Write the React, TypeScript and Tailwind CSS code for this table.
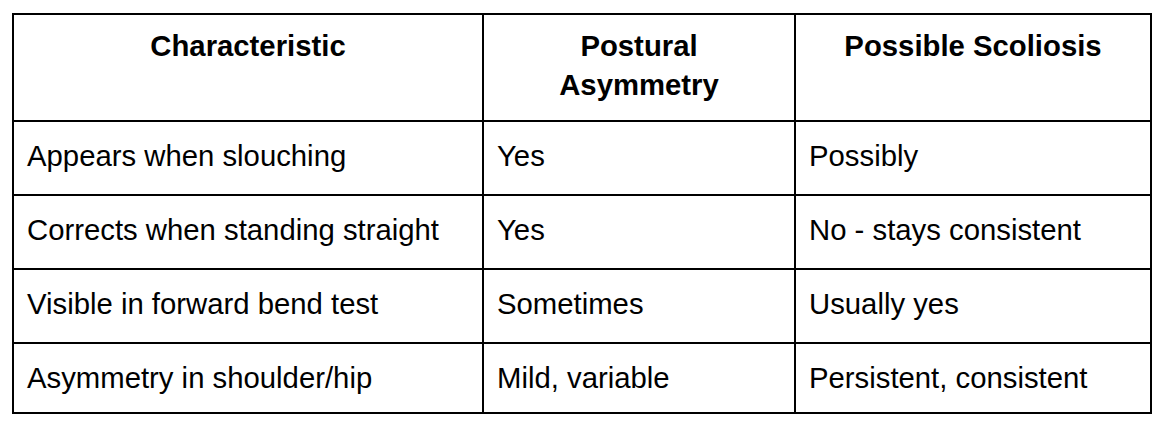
const rows = [
  ["Appears when slouching", "Yes", "Possibly"],
  ["Corrects when standing straight", "Yes", "No - stays consistent"],
  ["Visible in forward bend test", "Sometimes", "Usually yes"],
  ["Asymmetry in shoulder/hip", "Mild, variable", "Persistent, consistent"],
];

export default function App() {
  return (
    <div className="min-h-screen bg-white pl-[12px] pt-[13px] text-black font-['Liberation_Sans',Arial,sans-serif] text-[29.3px] leading-[1.15]">
      <div className="w-[1140px] border-2 border-black">
        {/* header */}
        <div className="flex h-[105px] font-bold text-center leading-[39px]">
          <div className="w-[468px] pt-[11px]">Characteristic</div>
          <div className="w-[312px] border-l-2 border-black pt-[11px]">
            Postural
            <br />
            Asymmetry
          </div>
          <div className="w-[356px] border-l-2 border-black pt-[11px]">Possible Scoliosis</div>
        </div>

        {rows.map((r, i) => (
          <div
            key={i}
            className={
              "flex border-t-2 border-black " + (i === rows.length - 1 ? "h-[70px]" : "h-[74px]")
            }
          >
            <div className="w-[468px] pl-[13px] pt-[17px]">{r[0]}</div>
            <div className="w-[312px] border-l-2 border-black pl-[13px] pt-[17px]">{r[1]}</div>
            <div className="w-[356px] border-l-2 border-black pl-[13px] pt-[17px]">{r[2]}</div>
          </div>
        ))}
      </div>
    </div>
  );
}
